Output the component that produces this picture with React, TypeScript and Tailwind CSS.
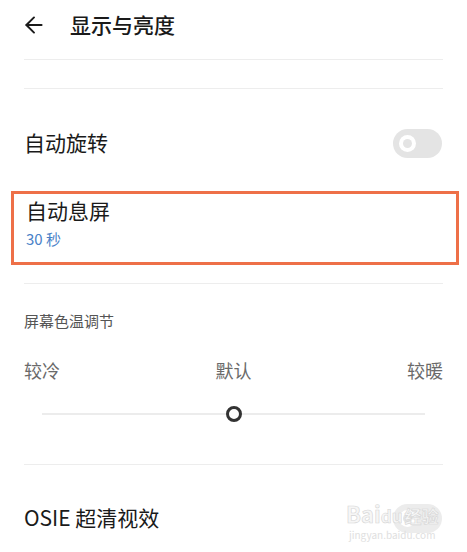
import { ArrowLeft } from 'lucide-react';

const font = { fontFamily: '"Noto Sans CJK SC", "Noto Sans", sans-serif' };

const Divider = () => <div className="mx-6 h-px bg-[#ededed]" />;

const Toggle = ({ faint = false }: { faint?: boolean }) => (
  <div
    className={`flex h-[29px] w-[49px] items-center rounded-full pl-[6px] ${
      faint ? 'bg-[#ececec]' : 'bg-[#e4e4e4]'
    }`}
  >
    <div className="flex h-[17px] w-[17px] items-center justify-center rounded-full bg-white">
      <div className="h-[9px] w-[9px] rounded-full bg-[#e4e4e4]" />
    </div>
  </div>
);

export default function App() {
  return (
    <div className="relative h-[552px] w-[467px] overflow-hidden bg-white" style={font}>
      {/* header */}
      <div className="flex h-[50px] items-center pl-[21px]">
        <ArrowLeft size={26} strokeWidth={1.8} className="text-[#1a1a1a]" />
        <span className="ml-[23px] text-[21px] font-medium text-[#1a1a1a]">显示与亮度</span>
      </div>

      <div className="h-[9px]" />
      <Divider />
      <div className="h-[28px]" />
      <Divider />

      {/* auto rotate */}
      <div className="flex h-[102px] items-center justify-between pl-6 pr-[25px] pt-[6px]">
        <span className="text-[21px] text-[#1a1a1a]">自动旋转</span>
        <Toggle />
      </div>

      {/* highlighted row */}
      <div className="ml-[11px] mr-[8px] flex h-[74px] flex-col border-[3px] border-[#ee7048] pl-3 pt-[2px]">
        <span className="text-[21px] leading-[28px] text-[#1a1a1a]">自动息屏</span>
        <span className="mt-[5px] text-[15px] leading-[20px] text-[#4a82c8]">30 秒</span>
      </div>

      <div className="h-[18px]" />
      <Divider />

      {/* color temperature */}
      <div className="px-6 pt-[27px]">
        <div className="text-[15px] leading-[20px] text-[#555]">屏幕色温调节</div>
        <div className="mt-[27px] flex items-center justify-between text-[18px] leading-[24px] text-[#6a6a6a]">
          <span>较冷</span>
          <span>默认</span>
          <span>较暖</span>
        </div>
        <div className="mx-[18px] mt-[24px] flex h-[16px] items-center">
          <div className="h-[2px] flex-1 bg-[#ececec]" />
          <div className="h-[16px] w-[16px] rounded-full border-[3px] border-[#333]" />
          <div className="h-[2px] flex-1 bg-[#ececec]" />
        </div>
      </div>

      <div className="h-[42px]" />
      <Divider />

      {/* OSIE */}
      <div className="flex h-[110px] items-center justify-between pb-[4px] pl-6 pr-[25px]">
        <span className="text-[21px] text-[#1a1a1a]">OSIE 超清视效</span>
        <Toggle faint />
      </div>

      {/* watermark */}
      <div className="absolute left-[346px] top-[500px] flex flex-col items-center">
        <div className="flex items-baseline text-[22px] font-bold leading-[26px] text-[#f6f6f6] [-webkit-text-stroke:0.6px_#d6d6d6]">
          <span>Bai</span>
          <span className="text-[17px]">du</span>
          <span className="ml-[2px] text-[17px]">经验</span>
        </div>
        <div className="text-[10px] leading-[12px] text-[#e0e0e0]">jingyan.baidu.com</div>
      </div>
    </div>
  );
}
